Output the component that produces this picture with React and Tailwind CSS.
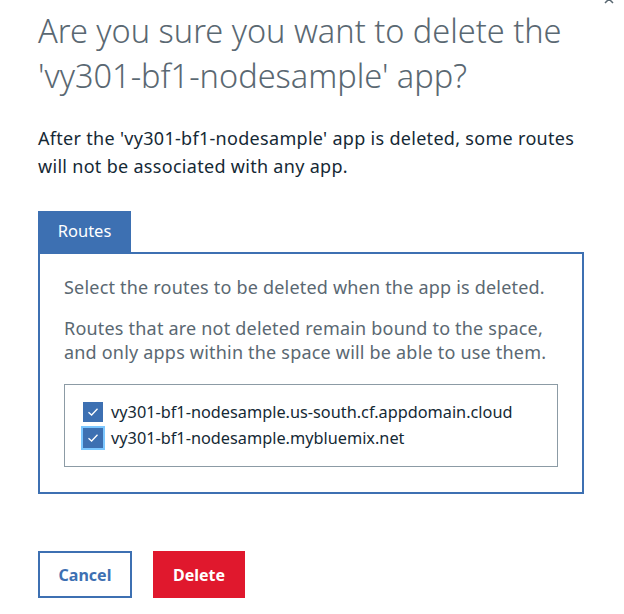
import { useState } from 'react';

const routes = [
  'vy301-bf1-nodesample.us-south.cf.appdomain.cloud',
  'vy301-bf1-nodesample.mybluemix.net',
];

const Check = ({ checked, focused, onToggle }) => (
  <button
    onClick={onToggle}
    className={`flex h-[20px] w-[20px] shrink-0 items-center justify-center bg-[#3d70b2] ${
      focused ? 'outline-2 outline-[#7cc7ff]' : ''
    }`}
  >
    {checked && (
      <svg width="12" height="10" viewBox="0 0 12 10" fill="none">
        <path d="M1.5 5.2 4.6 8 10.5 1.8" stroke="white" strokeWidth="1.3" />
      </svg>
    )}
  </button>
);

export default function App() {
  const [checked, setChecked] = useState([true, true]);

  return (
    <div
      className="relative h-[614px] w-[624px] overflow-hidden bg-white pl-[38px] pr-[40px]"
      style={{ fontFamily: '"Noto Sans", "Open Sans", sans-serif' }}
    >
      <button aria-label="Close" className="absolute right-[10px] top-[-6px] text-[#5a6872]">
        <svg width="10" height="10" viewBox="0 0 10 10">
          <path d="M1 1 9 9M9 1 1 9" stroke="currentColor" strokeWidth="1.5" />
        </svg>
      </button>

      <h1 className="pt-[8px] text-[32.5px] font-light leading-[45px] text-[#5a6872]">
        Are you sure you want to delete the 'vy301-bf1-nodesample' app?
      </h1>

      <p className="mt-[26px] text-[18px] leading-[28px] tracking-[0.3px] text-[#152935]">
        After the 'vy301-bf1-nodesample' app is deleted, some routes will not be associated with any app.
      </p>

      <div className="mt-[31px]">
        <div className="flex h-[41px] w-[93px] items-center justify-center bg-[#3d70b2] text-[16.5px] text-white">
          Routes
        </div>
        <div className="h-[242px] w-[546px] border-2 border-[#3d70b2] px-[24px] pt-[19px]">
          <p className="text-[18px] leading-[28px] tracking-[0.2px] text-[#5a6872]">
            Select the routes to be deleted when the app is deleted.
          </p>
          <p className="mt-[15px] text-[18px] leading-[24px] tracking-[0.2px] text-[#5a6872]">
            Routes that are not deleted remain bound to the space, and only apps within the space will be able to use them.
          </p>
          <div className="mt-[20px] flex h-[83px] w-[494px] flex-col gap-[6px] border border-[#8c9ba5] pl-[18px] pt-[17px]">
            {routes.map((r, i) => (
              <label key={r} className="flex items-center gap-[8px] text-[16.3px] leading-[20px] text-[#152935]">
                <Check
                  checked={checked[i]}
                  focused={i === 1}
                  onToggle={() => setChecked(checked.map((c, j) => (j === i ? !c : c)))}
                />
                {r}
              </label>
            ))}
          </div>
        </div>
      </div>

      <div className="mt-[57px] flex gap-[21px]">
        <button className="h-[47px] w-[94px] border-2 border-[#3d70b2] text-[16px] font-bold text-[#3d70b2]">
          Cancel
        </button>
        <button className="h-[47px] w-[92px] bg-[#e0182d] text-[16px] font-bold text-white">
          Delete
        </button>
      </div>
    </div>
  );
}
